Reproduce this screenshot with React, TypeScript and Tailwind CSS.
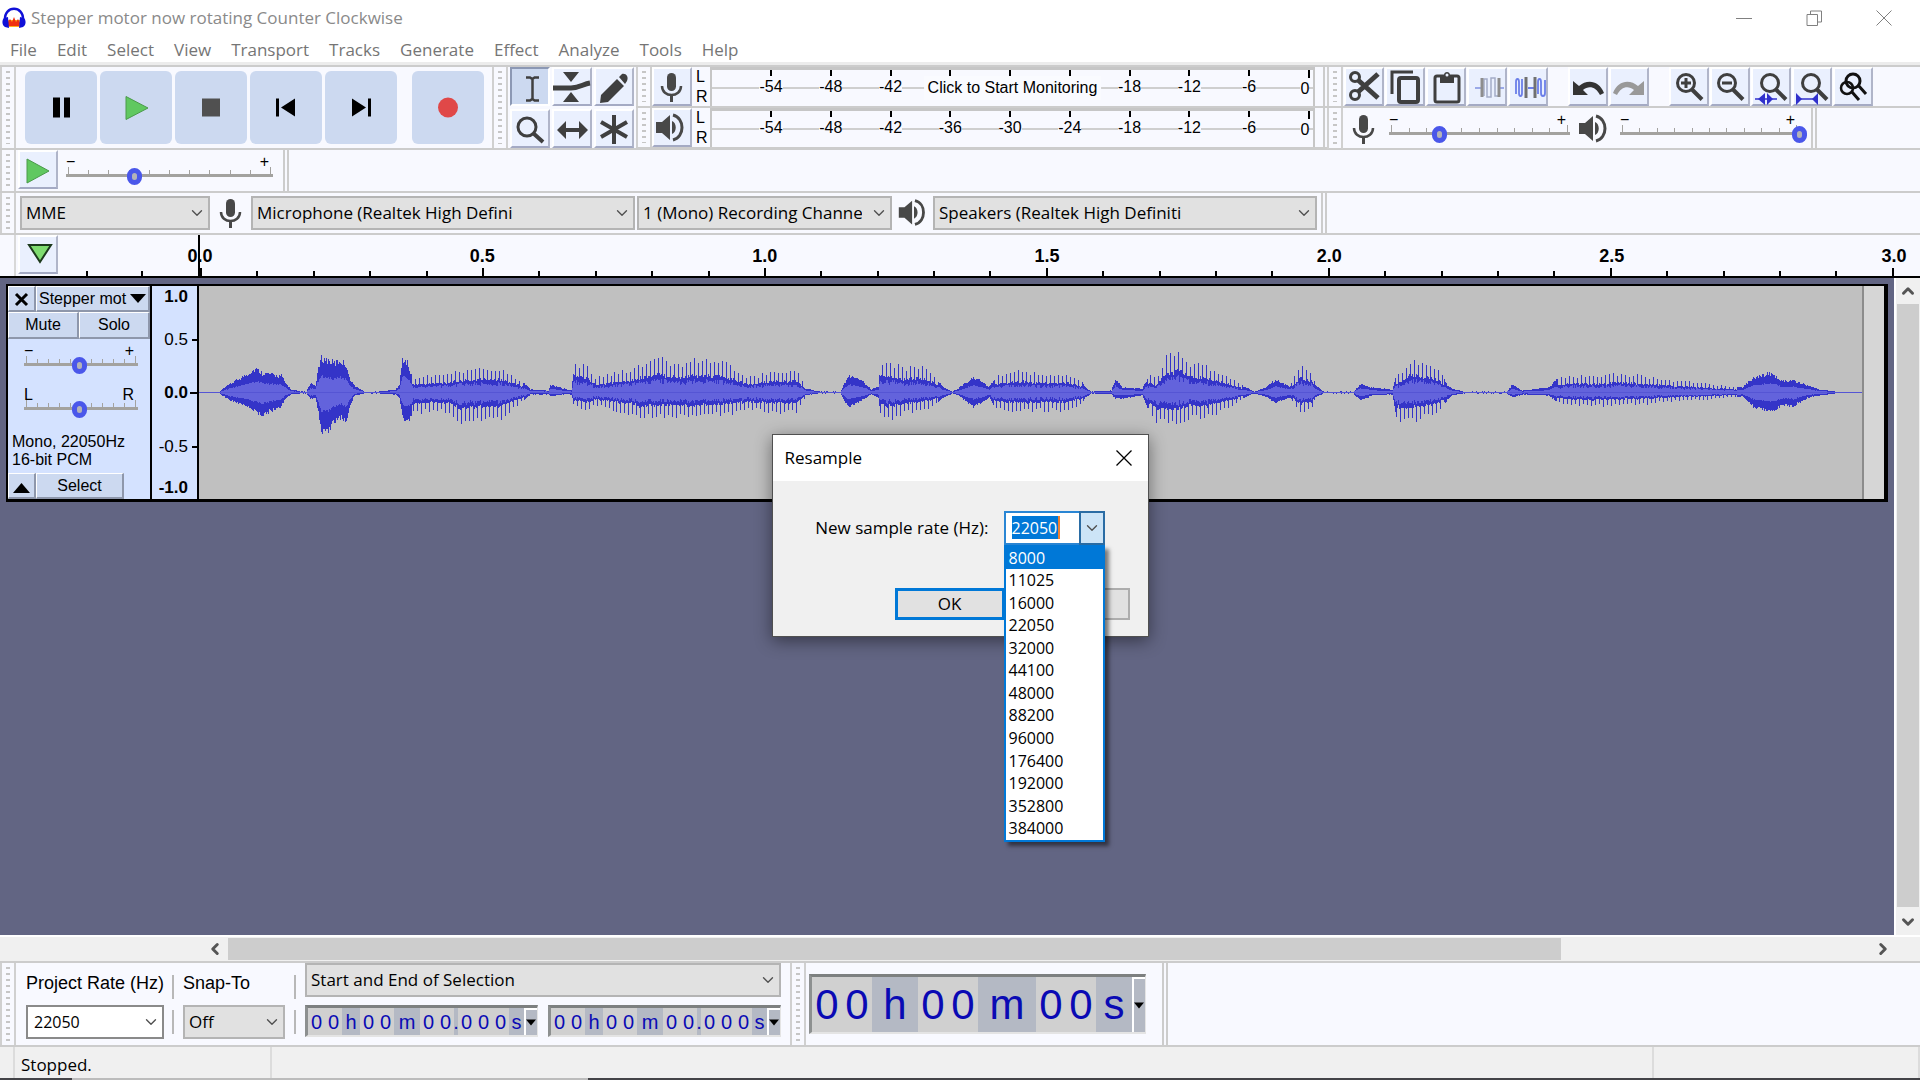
import { useState, type ReactNode } from "react";
import { ChevronDown, ChevronLeft, ChevronRight, ChevronUp } from "lucide-react";

const menus = ["File", "Edit", "Select", "View", "Transport", "Tracks", "Generate", "Effect", "Analyze", "Tools", "Help"];
const sampleRates = [
  "8000", "11025", "16000", "22050", "32000", "44100", "48000",
  "88200", "96000", "176400", "192000", "352800", "384000",
];
const meterMarks = ["-54", "-48", "-42", "-36", "-30", "-24", "-18", "-12", "-6", "0"];
// marks that lie under the "Click to Start Monitoring" prompt
const coveredMarks = ["-36", "-30", "-24"];

// [x, peak above, peak below] - x counts from the start of the clip
const envelope: [number, number, number][] = [
  [0, 0, 0], [20, 1, 1], [31, 9, 8], [45, 17, 13], [56, 24, 20], [63, 20, 23], [82, 17, 14], [86, 10, 6],
  [92, 3, 2], [102, 1, 1], [107, 1, 1], [111, 9, 7], [116, 7, 5], [118, 20, 15], [122, 35, 40], [129, 33, 42],
  [135, 30, 30], [141, 33, 25], [147, 28, 30], [150, 15, 15], [155, 7, 3], [165, 1, 1], [180, 1, 1], [196, 3, 2],
  [200, 8, 5], [203, 35, 25], [208, 30, 29], [213, 15, 22], [233, 17, 18], [249, 19, 20], [261, 22, 30],
  [282, 25, 27], [298, 25, 28], [310, 20, 20], [322, 12, 10], [331, 3, 2], [349, 2, 2], [351, 8, 4],
  [365, 4, 2], [372, 2, 2], [375, 30, 15], [388, 26, 19], [396, 15, 13], [412, 18, 17], [437, 25, 22],
  [440, 27, 26], [460, 34, 24], [481, 28, 24], [493, 32, 26], [505, 31, 23], [524, 31, 22], [538, 22, 20],
  [550, 15, 18], [575, 21, 20], [599, 21, 20], [605, 10, 8], [608, 4, 3], [620, 1, 1], [642, 1, 1],
  [650, 17, 15], [664, 12, 8], [673, 3, 2], [680, 6, 5], [682, 30, 20], [686, 32, 27], [705, 25, 22],
  [722, 27, 18], [736, 18, 13], [744, 6, 6], [754, 1, 1], [760, 4, 3], [775, 16, 15], [791, 6, 5], [796, 14, 15],
  [807, 19, 18], [824, 21, 20], [848, 17, 18], [869, 18, 18], [883, 12, 12], [887, 5, 5], [893, 1, 1],
  [913, 2, 2], [917, 14, 6], [924, 5, 6], [944, 4, 3], [951, 18, 20], [958, 13, 30], [967, 36, 31],
  [981, 40, 30], [991, 30, 25], [1009, 26, 26], [1024, 19, 18], [1038, 12, 12], [1046, 6, 5], [1056, 1, 1],
  [1067, 5, 4], [1077, 13, 11], [1080, 12, 9], [1092, 6, 5], [1094, 13, 10], [1102, 27, 21], [1113, 22, 18],
  [1117, 8, 5], [1125, 1, 1], [1155, 1, 1], [1162, 9, 8], [1174, 5, 3], [1194, 3, 2], [1198, 18, 25],
  [1202, 18, 29], [1213, 34, 29], [1234, 27, 22], [1241, 22, 18], [1249, 8, 8], [1255, 4, 3], [1266, 1, 1],
  [1309, 1, 1], [1315, 8, 5], [1325, 2, 2], [1351, 5, 3], [1360, 14, 10], [1377, 17, 13], [1398, 16, 14],
  [1423, 19, 12], [1447, 16, 12], [1472, 13, 9], [1509, 9, 7], [1545, 5, 4], [1556, 15, 14], [1572, 20, 20],
  [1586, 12, 13], [1596, 12, 14], [1611, 7, 5], [1623, 3, 3], [1639, 1, 1], [1665, 0, 0],
];
const voiced = [[213, 325], [375, 608], [682, 740], [796, 885], [950, 1045], [1094, 1116], [1198, 1246], [1360, 1540]];

function buildWave() {
  let peaks = "";
  let rms = "";
  let k = 0;
  for (let x = 0; x < 1665; x++) {
    while (k < envelope.length - 2 && envelope[k + 1][0] <= x) k++;
    const [x0, u0, d0] = envelope[k];
    const [x1, u1, d1] = envelope[k + 1];
    const t = (x - x0) / (x1 - x0);
    const up = u0 + (u1 - u0) * t;
    const down = d0 + (d1 - d0) * t;
    const noiseA = Math.abs((Math.sin(x * 12.9898) * 43758.5453) % 1);
    const noiseB = Math.abs((Math.sin(x * 78.233) * 12543.1234) % 1);
    const spiky = voiced.some(([a, b]) => x >= a && x < b);
    // voiced parts: one tall pitch pulse every few columns, low columns between them
    const high = !spiky || x % 4 === 0 ? 1.1 : 0.6;
    const low = !spiky || x % 4 === 2 ? 1.1 : 0.6;
    const a = Math.max(0.6, up * (0.78 + 0.22 * noiseA) * high);
    const b = Math.max(0.6, down * (0.78 + 0.22 * noiseB) * low);
    peaks += `M${x + 0.5} ${(108 - a).toFixed(1)}V${(108 + b).toFixed(1)}`;
    const body = spiky ? 0.26 + 0.18 * noiseB : 0.42 + 0.1 * noiseB;
    rms += `M${x + 0.5} ${(108 - Math.max(0.4, up * body)).toFixed(1)}V${(108 + Math.max(0.4, down * body)).toFixed(1)}`;
  }
  return { peaks, rms };
}
const wave = buildWave();

function Grip({ className = "" }: { className?: string }) {
  return (
    <div className={`flex w-4 shrink-0 flex-col items-center justify-center border-x-2 border-[#d0d0d0] px-1 ${className}`}>
      <div className="my-1 w-full flex-1 bg-[repeating-linear-gradient(#c6c6c6_0_2px,transparent_2px_6px)]" />
    </div>
  );
}

function ToolButton({
  label,
  pressed,
  className = "w-10",
  children,
}: {
  label: string;
  pressed?: boolean;
  className?: string;
  children: ReactNode;
}) {
  return (
    <button
      aria-label={label}
      aria-pressed={pressed}
      className={`h-[39px] shrink-0 border-2 ${
        pressed
          ? "border-t-[#8c98b4] border-l-[#8c98b4] border-r-white border-b-white bg-[#ccd9f0]"
          : "border-t-white border-l-white border-r-[#b0b5c9] border-b-[#a4aac4] bg-[#eaf0fe]"
      } ${className}`}
    >
      <svg viewBox="0 0 40 38" className="-m-[2px] h-[38px] w-10" fill="none" stroke="#3f3f3f" strokeWidth="3">
        {children}
      </svg>
    </button>
  );
}

function MicShape() {
  return (
    <g stroke="#484848" fill="none">
      <rect x="15" y="5" width="9" height="18" rx="4.5" fill="#484848" stroke="none" />
      <path d="M10 18c0 12 19 12 19 0" strokeWidth="2.5" />
      <path d="M19.5 27v7" strokeWidth="3" />
    </g>
  );
}

function SpeakerShape() {
  return (
    <g stroke="#484848" fill="none">
      <path d="M4 13h6l8-7v25l-8-7H4z" fill="#484848" stroke="none" />
      <path d="M20 12c5 2 5 11 0 13z" fill="#484848" stroke="none" />
      <path d="M21 6c12 3 12 22 0 25" strokeWidth="3" />
    </g>
  );
}

function Lens({ cx = 17 }: { cx?: number }) {
  return (
    <>
      <circle cx={cx} cy="15" r="8.5" />
      <path d={`M${cx + 6} 21.5l10 10`} strokeWidth="4" />
    </>
  );
}

function Slider({
  label,
  value,
  ends = ["−", "+"],
  className = "",
}: {
  label: string;
  value: number;
  ends?: [string, string];
  className?: string;
}) {
  const [v, setV] = useState(value);
  return (
    <div className={`relative h-8 shrink-0 ${className}`}>
      <div className="flex h-3 items-center justify-between pr-1 text-base leading-3 font-normal text-black">
        <span>{ends[0]}</span>
        <span>{ends[1]}</span>
      </div>
      <div className="flex h-[9px] items-end justify-between border-b-[3px] border-[#a3a29f] px-[2px]">
        {Array.from({ length: 11 }, (_, i) => (
          <span key={i} className={`w-px bg-[#a3a29f] ${i % 10 === 0 ? "h-[7px]" : "h-1"}`} />
        ))}
      </div>
      <input
        type="range"
        aria-label={label}
        min={0}
        max={100}
        value={v}
        onChange={(e) => setV(Number(e.target.value))}
        className="absolute top-[11px] -left-2 h-[18px] w-[calc(100%+16px)] appearance-none bg-transparent [&::-webkit-slider-thumb]:h-[17px] [&::-webkit-slider-thumb]:w-[15px] [&::-webkit-slider-thumb]:appearance-none [&::-webkit-slider-thumb]:rounded-full [&::-webkit-slider-thumb]:border-[5px] [&::-webkit-slider-thumb]:border-[#4a57ea] [&::-webkit-slider-thumb]:bg-[#b4b3b8]"
      />
    </div>
  );
}

function Select({ id, label, value, className = "" }: { id: string; label?: string; value: string; className?: string }) {
  return (
    <div className={`relative h-[34px] shrink-0 ${className}`}>
      <select
        id={id}
        aria-label={label}
        className="h-full w-full appearance-none overflow-hidden rounded-none border-2 border-[#b4b4b4] bg-[#e1e1e1] pr-7 pl-1 font-['Open_Sans',sans-serif] text-[17px] text-black"
      >
        <option>{value}</option>
      </select>
      <ChevronDown className="pointer-events-none absolute top-2 right-1 size-[18px] text-[#505050]" strokeWidth={1.8} />
    </div>
  );
}

function Meter({ label, icon, idle }: { label: string; icon: ReactNode; idle?: boolean }) {
  return (
    <div className="flex h-[41px] border-b-2 border-[#cccccc]">
      <Grip />
      <ToolButton label={label}>{icon}</ToolButton>
      <div className="flex w-[18px] shrink-0 flex-col justify-between pl-1 text-base leading-5">
        <span>L</span>
        <span>R</span>
      </div>
      <div className="relative mr-2 flex-1 border-t-[3px] border-r-2 border-l-2 border-[#c6c6c6]">
        <div className="absolute inset-x-0 top-[17px] h-[2px] bg-[#cfcfcf]" />
        <div className="flex justify-between pr-1 pl-[59px]">
          {meterMarks.map((m) => (
            <span key={m} className="relative flex w-0 flex-col items-center">
              <span className={`w-[2px] bg-black ${m === "0" ? "h-2" : "h-1.5"}`} />
              {!(idle && coveredMarks.includes(m)) && (
                <span className={`bg-[#f8f9ff] text-base leading-[22px] ${m === "0" ? "mr-2" : ""}`}>{m}</span>
              )}
            </span>
          ))}
        </div>
        {idle && (
          <button className="absolute top-1.5 left-1/2 -translate-x-1/2 bg-[#fafbff] px-1 text-base leading-6 whitespace-nowrap">
            Click to Start Monitoring
          </button>
        )}
      </div>
      <div className="w-1 shrink-0 border-l-2 border-[#cccccc]" />
    </div>
  );
}

function Transport() {
  return (
    <div className="flex shrink-0 items-center">
      <Grip className="h-full" />
      <div className="flex gap-[3px] pr-2 pl-[9px]">
        {[
          ["Pause", <path d="M28 26h7v20h-7zM39 26h6v20h-6z" fill="#000" />],
          ["Play", <path d="M26 25l22 11.500-22 11.500z" fill="#60c860" stroke="#4a9a4a" />],
          ["Stop", <path d="M27 27h18v18H27z" fill="#505050" />],
          ["Skip to Start", <path d="M26 27h3v18h-3zM45 27v18L31 36z" fill="#000" />],
          ["Skip to End", <path d="M43 27h3v18h-3zM27 27v18l14-9z" fill="#000" />],
          ["Record", <circle cx="36" cy="36" r="10" fill="#e04848" />],
        ].map(([name, shape]) => (
          <button
            key={name as string}
            aria-label={name as string}
            className={`h-[73px] w-[72px] rounded-md bg-[#ccd9f0] ${name === "Record" ? "ml-3" : ""}`}
          >
            <svg viewBox="0 0 72 72" className="size-full">
              {shape}
            </svg>
          </button>
        ))}
      </div>
    </div>
  );
}

function Tools() {
  return (
    <div className="grid shrink-0 grid-cols-3 gap-x-[2px] gap-y-[3px] px-[2px]">
      <ToolButton label="Selection" pressed>
        <path d="M16 9.500h4l2.300 1.500 2.300-1.500H29M22.500 11v20M16 32.500h4l2.300-1.500 2.300 1.500H29" strokeWidth="2.500" />
      </ToolButton>
      <ToolButton label="Envelope">
        <path d="M11 4h16l-8 10zM11 34h16l-8-10z" fill="#3f3f3f" stroke="none" />
        <path d="M1 20h18c9 0 12-4 19-5" strokeWidth="5" />
      </ToolButton>
      <ToolButton label="Draw">
        <path d="M6 35l1-8L23 11l7 7-16 16zM25 9l3-3c4-1 7 3 5 7l-2 3z" fill="#3f3f3f" stroke="none" />
      </ToolButton>
      <ToolButton label="Zoom">
        <circle cx="17" cy="17" r="9" />
        <path d="M23 23l10 9" strokeWidth="4" />
      </ToolButton>
      <ToolButton label="Time Shift">
        <path d="M5 20l9-9v7h13v-7l9 9-9 9v-7H14v7z" fill="#3f3f3f" stroke="none" />
      </ToolButton>
      <ToolButton label="Multi-Tool">
        <path d="M20 5v29M7 12l26 15M33 12L7 27" strokeWidth="4" />
      </ToolButton>
    </div>
  );
}

function EditTools() {
  return (
    <div className="flex h-[41px] border-b-2 border-[#cccccc]">
      <Grip />
      <div className="flex gap-[1px] pl-px">
        <ToolButton label="Cut">
          <circle cx="11" cy="9" r="4.500" />
          <circle cx="11" cy="27" r="4.500" />
          <path d="M14 24L34 6M14 12l20 18" strokeWidth="5" />
        </ToolButton>
        <ToolButton label="Copy">
          <path d="M7 26V4h21" />
          <rect x="14" y="10" width="19" height="24" rx="2" strokeWidth="4" />
        </ToolButton>
        <ToolButton label="Paste">
          <rect x="9" y="8" width="24" height="26" rx="2" />
          <path d="M14 7h4c0-4 6-4 6 0h4v8H14z" fill="#3f3f3f" stroke="none" />
          <circle cx="21" cy="7" r="1.500" fill="#eaf0fe" stroke="none" />
        </ToolButton>
        <ToolButton label="Trim Audio">
          <path d="M8 20h6M32 20h5" stroke="#9aa9e8" strokeWidth="2" />
          <path d="M17 28V11h3v18h4V10h4v18h4V12" stroke="#a4acc8" strokeWidth="1.500" />
          <path d="M15 10v19M32 10v19" stroke="#8d8d8d" />
        </ToolButton>
        <ToolButton label="Silence Audio">
          <path d="M8 26V14c0-4 3-4 3 0v11c0 4 3 4 3 0V11M30 26V14c0-4 3-4 3 0v11c0 4 4 4 4 0V12M20 20h6" stroke="#6b7ee8" strokeWidth="1.800" />
          <path d="M18 9v21M27 9v21" stroke="#707070" />
        </ToolButton>
      </div>
      <div className="ml-5 flex gap-[1px]">
        <ToolButton label="Undo">
          <path d="M5 13v14h15l-5-5c6-5 13-3 17 5l4-2C31 12 19 11 11 18z" fill="#333" stroke="none" />
        </ToolButton>
        <ToolButton label="Redo">
          <path d="M35 13v14H20l5-5c-6-5-13-3-17 5l-4-2C9 12 21 11 29 18z" fill="#999" stroke="none" />
        </ToolButton>
      </div>
      <div className="ml-5 flex gap-[1px]">
        <ToolButton label="Zoom In">
          <Lens />
          <path d="M12 15h10M17 10v10" />
        </ToolButton>
        <ToolButton label="Zoom Out">
          <Lens />
          <path d="M12 15h10" />
        </ToolButton>
        <ToolButton label="Fit Selection to Width">
          <Lens cx={19} />
          <path d="M4 31h22" stroke="#3030cc" strokeWidth="1.500" />
          <path d="M7 31l7-6v12zM22 31l-6-6v12z" fill="#3030cc" stroke="none" />
        </ToolButton>
        <ToolButton label="Fit Project to Width">
          <Lens cx={19} />
          <path d="M4 31h22" stroke="#3030cc" strokeWidth="1.500" />
          <path d="M10 31l-6-6v12zM20 31l6-6v12z" fill="#3030cc" stroke="none" />
        </ToolButton>
        <ToolButton label="Zoom Toggle">
          <g stroke="#111">
            <circle cx="20" cy="13" r="7" />
            <circle cx="14" cy="20" r="6" strokeWidth="2.500" />
            <path d="M25 17l8 9M19 24l7 8" />
          </g>
        </ToolButton>
      </div>
    </div>
  );
}

function Mixer() {
  return (
    <div className="flex h-[41px] items-start">
      <Grip className="h-full" />
      <svg viewBox="0 0 40 38" className="mt-[2px] ml-px h-[38px] w-10 shrink-0">
        <MicShape />
      </svg>
      <Slider label="Recording Volume" value={28} className="mt-1.5 ml-[5px] w-[181px]" />
      <svg viewBox="0 0 40 38" className="mt-[2px] ml-[5px] h-[38px] w-10 shrink-0">
        <SpeakerShape />
      </svg>
      <Slider label="Playback Volume" value={100} className="mt-1.5 ml-[5px] w-[179px]" />
      <div className="ml-3 h-full w-1.5 border-x-2 border-[#cccccc]" />
    </div>
  );
}

function Timeline() {
  return (
    <div className="flex h-[45px] border-t-2 border-b-2 border-t-[#cccccc] border-b-black">
      <div className="w-4 shrink-0 border-r-2 border-[#d8d8d8]" />
      <ToolButton label="Pinned Play Head" className="ml-[2px] w-10">
        <path d="M11 9h22L22 26z" fill="#7fdc70" stroke="#1c3a1c" strokeWidth="2" />
      </ToolButton>
      <div className="flex w-[140px] shrink-0 items-end justify-between pr-[55px] pl-7">
        <span className="h-[5px] w-[2px] bg-black" />
        <span className="h-[5px] w-[2px] bg-black" />
      </div>
      <div className="flex flex-1 flex-col border-l-2 border-black">
        <div className="flex flex-1 items-end justify-between pr-[26px] text-[18px] leading-6 font-bold">
          {["0.0", "0.5", "1.0", "1.5", "2.0", "2.5", "3.0"].map((t) => (
            <span key={t} className="flex w-0 justify-center">
              {t}
            </span>
          ))}
        </div>
        <div className="flex h-2 items-end justify-between pr-[26px]">
          {Array.from({ length: 31 }, (_, i) => (
            <span key={i} className={`w-[2px] bg-black ${i % 5 === 0 ? "h-2" : "h-[5px]"}`} />
          ))}
        </div>
      </div>
    </div>
  );
}

const panelButton =
  "border-t border-l border-r-2 border-b-2 border-t-white border-l-white border-r-[#8e97ab] border-b-[#8e97ab] bg-[#ccd9f0] text-base leading-5 whitespace-nowrap";

function Track() {
  return (
    <div className="flex h-[218px] border-2 border-r-4 border-b-[3px] border-black">
      <div className="flex w-36 shrink-0 flex-col border-r-2 border-black bg-[#d4e2ff]">
        <div className="flex h-[26px]">
          <button aria-label="Close track" className={`w-7 ${panelButton}`}>
            <svg viewBox="0 0 24 22" className="h-[22px] w-6" stroke="#000" strokeWidth="3">
              <path d="M7 6l11 11M18 6L7 17" />
            </svg>
          </button>
          <button className={`flex flex-1 items-center overflow-hidden pl-[2px] ${panelButton}`}>
            Stepper mot
            <svg viewBox="0 0 16 10" className="ml-1 h-2.5 w-4 shrink-0">
              <path d="M0 0h16L8 9z" />
            </svg>
          </button>
        </div>
        <div className="flex h-[27px]">
          <button className={`flex-1 ${panelButton}`}>Mute</button>
          <button className={`flex-1 ${panelButton}`}>Solo</button>
        </div>
        <Slider label="Gain" value={49} className="mt-[6px] ml-4 w-[114px]" />
        <Slider label="Pan" value={49} ends={["L", "R"]} className="mt-3 ml-4 w-[114px]" />
        <p className="mt-auto pb-1 pl-1 text-base leading-[18px]">
          Mono, 22050Hz
          <br />
          16-bit PCM
        </p>
        <div className="flex h-[26px]">
          <button aria-label="Collapse" className={`w-7 ${panelButton}`}>
            <svg viewBox="0 0 24 22" className="h-[22px] w-6">
              <path d="M4 18h17L12.500 8z" />
            </svg>
          </button>
          <button className={`w-[88px] ${panelButton}`}>Select</button>
        </div>
      </div>
      <div className="flex w-[47px] shrink-0 flex-col border-r-2 border-black bg-[#d4e2ff] text-right text-[17px]">
        <span className="h-[22px] pr-[9px] leading-[22px] font-bold">1.0</span>
        <span className="flex h-16 items-center justify-end gap-1">
          0.5<i className="h-[2px] w-[5px] bg-black" />
        </span>
        <span className="flex h-[42px] items-center justify-end gap-[2px] font-bold">
          0.0<i className="h-[2px] w-[7px] bg-black" />
        </span>
        <span className="flex h-[66px] items-center justify-end gap-1">
          -0.5<i className="h-[2px] w-[5px] bg-black" />
        </span>
        <span className="pr-[9px] leading-4 font-bold">-1.0</span>
      </div>
      <div className="flex-1 border-r-2 border-[#8c8c8c] bg-[#c0c0c0]">
        <svg
          viewBox="0 0 1665 216"
          preserveAspectRatio="none"
          shapeRendering="crispEdges"
          className="block h-[213px] w-full"
        >
          <path d={wave.peaks} stroke="#3232c8" strokeWidth="1" />
          <path d={wave.rms} stroke="#6464dc" strokeWidth="1" />
          <path d="M0 108H1665" stroke="#5555d4" strokeWidth="2" />
        </svg>
      </div>
      <div className="w-5 shrink-0 bg-[#d6d6d6]" />
    </div>
  );
}

function TimeField({ label, large }: { label: string; large?: boolean }) {
  const groups = large ? ["00", "h", "00", "m", "00", "s"] : ["00", "h", "00", "m", "00", ".", "000", "s"];
  const unitWidth: Record<string, string> = large
    ? { h: "w-[46px]", m: "w-[58px]", s: "flex-1" }
    : { h: "w-[18px]", m: "w-[26px]", ".": "w-1", s: "flex-1" };
  return (
    <div
      role="group"
      aria-label={label}
      className={`flex shrink-0 border-t-[3px] border-r border-b-2 border-l-[3px] border-t-[#7d8080] border-l-[#8d9090] border-r-[#e4e4e4] border-b-[#e4e4e4] bg-[#b4b9c4] text-[#0a0ab4] ${
        large ? "h-[60px] w-[337px] text-[42px]" : "h-8 w-[233px] text-[20px]"
      }`}
    >
      {groups.map((g, i) =>
        g[0] === "0" ? (
          <span key={i} className="flex items-center bg-[#d0d0d0]">
            {[...g].map((c, j) => (
              <span key={j} className={`text-center leading-none ${large ? "w-[30px]" : "w-[17px]"}`}>
                {c}
              </span>
            ))}
          </span>
        ) : (
          <span key={i} className={`flex items-center justify-center leading-none ${unitWidth[g]}`}>
            {g}
          </span>
        ),
      )}
      <button aria-label={`${label} format`} className="w-[13px] border-t-2 border-l-2 border-white">
        <svg viewBox="0 0 10 6" className="h-[7px] w-2.5">
          <path d="M0 0h10L5 6z" />
        </svg>
      </button>
    </div>
  );
}

function SelectionBar() {
  return (
    <div className="flex h-[86px] shrink-0 border-t-2 border-b-2 border-[#cccccc] bg-[#f8f9ff]">
      <Grip />
      <div className="flex flex-col justify-between pt-1 pb-1.5 pl-2.5 text-[18px]">
        <label htmlFor="project-rate" className="leading-8 whitespace-nowrap">
          Project Rate (Hz)
        </label>
        <div className="relative h-[34px] w-[138px]">
          <input
            id="project-rate"
            defaultValue="22050"
            className="h-full w-full border-2 border-[#8a8a8a] bg-white pl-1.5 font-['Open_Sans',sans-serif] text-base"
          />
          <ChevronDown className="pointer-events-none absolute top-2 right-1 size-[18px] text-[#505050]" strokeWidth={1.8} />
        </div>
      </div>
      <div className="ml-2 flex flex-col justify-around py-1.5">
        <i className="h-6 w-[2px] bg-[#b8b8b8]" />
        <i className="h-6 w-[2px] bg-[#b8b8b8]" />
      </div>
      <div className="ml-[9px] flex flex-col justify-between pt-1 pb-1.5 text-[18px]">
        <label htmlFor="snap-to" className="leading-8">
          Snap-To
        </label>
        <Select id="snap-to" value="Off" className="w-[102px]" />
      </div>
      <div className="ml-[9px] flex flex-col justify-around py-1.5">
        <i className="h-6 w-[2px] bg-[#b8b8b8]" />
        <i className="h-6 w-[2px] bg-[#b8b8b8]" />
      </div>
      <div className="mx-[9px] flex flex-col justify-between pb-2">
        <Select id="selection-mode" label="Selection display" value="Start and End of Selection" className="w-full" />
        <div className="flex gap-2.5">
          <TimeField label="Selection start" />
          <TimeField label="Selection end" />
        </div>
      </div>
      <Grip />
      <div className="flex items-center pl-[3px]">
        <TimeField label="Audio position" large />
      </div>
      <div className="ml-4 w-1.5 border-x-2 border-[#cccccc]" />
    </div>
  );
}

function ResampleDialog() {
  const [rate, setRate] = useState("22050");
  return (
    <div className="absolute inset-0 flex items-center justify-center pb-2.5">
      <div
        role="dialog"
        aria-label="Resample"
        className="w-[377px] border border-[#505050] bg-[#f0f0f0] font-['Open_Sans',sans-serif] text-[17px] shadow-[0_4px_16px_rgba(0,0,0,0.45)]"
      >
        <div className="flex h-[46px] items-center justify-between bg-white pr-4 pl-3">
          <h2>Resample</h2>
          <button aria-label="Close">
            <svg viewBox="0 0 16 16" className="size-4" stroke="#000" strokeWidth="1.3">
              <path d="M0.500 0.500l15 15M15.500 0.500l-15 15" />
            </svg>
          </button>
        </div>
        <div className="relative flex items-center justify-end pt-[30px] pr-[43px]">
          <label htmlFor="rate" className="mr-[15px]">
            New sample rate (Hz):
          </label>
          <div className="flex h-[34px] w-[101px] border-2 border-[#2a86d4] bg-white">
            <div className="flex flex-1 items-center pl-1.5">
              <input
                id="rate"
                value={rate}
                onChange={(e) => setRate(e.target.value)}
                className="h-[23px] w-12 border-r-2 border-[#f08030] bg-[#0078d7] text-base text-white"
              />
            </div>
            <button aria-label="Show rates" className="-my-[2px] -mr-[2px] flex w-[26px] items-center justify-center border-2 border-[#2a6ca4] bg-[#cce4f7]">
              <ChevronDown className="size-[18px] text-[#505050]" strokeWidth={1.8} />
            </button>
          </div>
          <ul
            role="listbox"
            aria-label="Sample rates"
            className="absolute top-full right-[43px] flex h-[297px] w-[101px] flex-col border-2 border-[#0078d7] bg-white text-base shadow-[4px_4px_4px_rgba(0,0,0,0.5)]"
          >
            {sampleRates.map((r, i) => (
              <li
                key={r}
                role="option"
                aria-selected={i === 0}
                onClick={() => setRate(r)}
                className={`flex flex-1 items-center pl-[3px] leading-5 ${i === 0 ? "bg-[#0078d7] text-white" : "text-black"}`}
              >
                {r}
              </li>
            ))}
          </ul>
        </div>
        <div className="flex justify-end gap-2.5 pt-[43px] pr-[18px] pb-4">
          <button className="h-8 w-[110px] border-[3px] border-[#0078d7] bg-[#e1e1e1]">OK</button>
          <button aria-label="Cancel" className="h-8 w-[115px] border-2 border-[#adadad] bg-[#e1e1e1]" />
        </div>
      </div>
    </div>
  );
}

export default function App() {
  return (
    <div className="relative flex h-screen flex-col overflow-hidden bg-white font-['Liberation_Sans',Arial,sans-serif] text-black">
      <header className="flex h-9 shrink-0 items-center pl-[2px]">
        <svg viewBox="0 0 24 24" className="size-6">
          <path d="M5 14h14l-1 7H6z" fill="#ffb020" />
          <path d="M6 16l2-3 2 3 2-5 2 5 2-3 2 4-1 3H6z" fill="#f03010" />
          <path d="M3 14C2 -1 22 -1 21 14" fill="none" stroke="#1010d8" strokeWidth="2.500" />
          <path d="M2 12l4-1 1 11-4-1C-.5 19 0 14 2 12zM22 12l-4-1-1 11 4-1c3.500-2 3-7 1-9z" fill="#1010d8" />
        </svg>
        <h1 className="ml-[5px] font-['Open_Sans',sans-serif] text-[17px] text-[#8a8a8a]">
          Stepper motor now rotating Counter Clockwise
        </h1>
        <div className="mr-7 ml-auto flex items-center gap-[54px] text-[#808080]">
          <button aria-label="Minimize">
            <svg viewBox="0 0 16 16" className="size-4" stroke="currentColor">
              <path d="M0 8.500h16" />
            </svg>
          </button>
          <button aria-label="Restore">
            <svg viewBox="0 0 16 16" className="size-4" fill="none" stroke="currentColor">
              <path d="M1 4.500h10.500v11H1zM4.500 4V1h11v11H12" />
            </svg>
          </button>
          <button aria-label="Close window">
            <svg viewBox="0 0 16 16" className="size-4" stroke="currentColor">
              <path d="M0.500 0.500l15 15M15.500 0.500l-15 15" />
            </svg>
          </button>
        </div>
      </header>
      <nav className="flex h-[29px] shrink-0 items-start gap-5 border-b-[3px] border-[#ececec] pl-2.5 font-['Open_Sans',sans-serif] text-[17px] leading-7 text-[#757575]">
        {menus.map((m) => (
          <button key={m}>{m}</button>
        ))}
      </nav>

      <div className="shrink-0 bg-[#f8f9ff]">
        <div className="flex h-[85px] border-t-2 border-b-2 border-[#cccccc]">
          <Transport />
          <Grip />
          <Tools />
          <div className="w-[691px] shrink-0">
            <Meter label="Record Meter" icon={<MicShape />} idle />
            <Meter label="Playback Meter" icon={<SpeakerShape />} />
          </div>
          <div className="flex-1">
            <EditTools />
            <Mixer />
          </div>
        </div>
        <div className="flex h-[41px]">
          <Grip />
          <ToolButton label="Play-at-Speed" className="ml-[2px] w-10">
            <path d="M9 8l22 12L9 32z" fill="#60c860" stroke="#4a9a4a" strokeWidth="1" />
          </ToolButton>
          <Slider label="Playback Speed" value={33} className="mt-1.5 ml-2 w-[207px]" />
          <div className="ml-2.5 w-1.5 border-x-2 border-[#cccccc]" />
        </div>
        <div className="flex h-[42px] items-center border-t-2 border-[#cccccc]">
          <Grip className="h-full" />
          <Select id="host" label="Audio host" value="MME" className="ml-1 w-[190px]" />
          <svg viewBox="0 0 40 38" className="ml-[1px] h-[38px] w-10 shrink-0">
            <MicShape />
          </svg>
          <Select id="rec-device" label="Recording device" value="Microphone (Realtek High Defini" className="w-[384px]" />
          <Select id="channels" label="Recording channels" value="1 (Mono) Recording Channel" className="ml-[2px] w-[255px]" />
          <svg viewBox="0 0 40 38" className="ml-[3px] h-[38px] w-[38px] shrink-0">
            <SpeakerShape />
          </svg>
          <Select id="play-device" label="Playback device" value="Speakers (Realtek High Definiti" className="w-[384px]" />
          <div className="ml-1 h-full w-1.5 border-x-2 border-[#cccccc]" />
        </div>
        <Timeline />
      </div>

      <main className="flex min-h-0 flex-1">
        <div className="flex-1 bg-[#626583] px-1.5 pt-1.5">
          <Track />
        </div>
        <div className="flex w-[26px] shrink-0 flex-col items-center border-l-2 border-white bg-[#f0f0f0]">
          <button aria-label="Scroll up" className="py-1">
            <ChevronUp className="size-[18px] text-[#555]" strokeWidth={4} />
          </button>
          <div className="w-[22px] flex-1 bg-[#cdcdcd]" />
          <button aria-label="Scroll down" className="pt-1.5 pb-1">
            <ChevronDown className="size-[18px] text-[#555]" strokeWidth={4} />
          </button>
        </div>
      </main>
      <div className="flex h-[26px] shrink-0 items-center border-t-2 border-white bg-[#f0f0f0] pr-7 pl-[206px]">
        <button aria-label="Scroll left">
          <ChevronLeft className="size-[18px] text-[#555]" strokeWidth={4} />
        </button>
        <div className="ml-1 flex flex-1">
          <div className="h-[22px] w-[81%] bg-[#cdcdcd]" />
        </div>
        <button aria-label="Scroll right">
          <ChevronRight className="size-[18px] text-[#555]" strokeWidth={4} />
        </button>
      </div>

      <SelectionBar />
      <footer className="shrink-0">
        <div className="flex h-[31px] items-center bg-[#f0f0f0] font-['Open_Sans',sans-serif] text-[17px]">
          <div className="w-[15px] self-stretch border-r-2 border-[#dcdcdc]" />
          <p className="flex w-[257px] items-center self-stretch border-r-2 border-[#dcdcdc] pt-1 pl-1.5">Stopped.</p>
          <div className="flex-1" />
          <div className="w-[268px] self-stretch border-x-2 border-[#dcdcdc]" />
        </div>
        <div className="flex h-[2px] bg-[#444448]">
          <div className="ml-[72px] w-[516px] bg-[#bcbcbc]" />
        </div>
      </footer>
      <ResampleDialog />
    </div>
  );
}
